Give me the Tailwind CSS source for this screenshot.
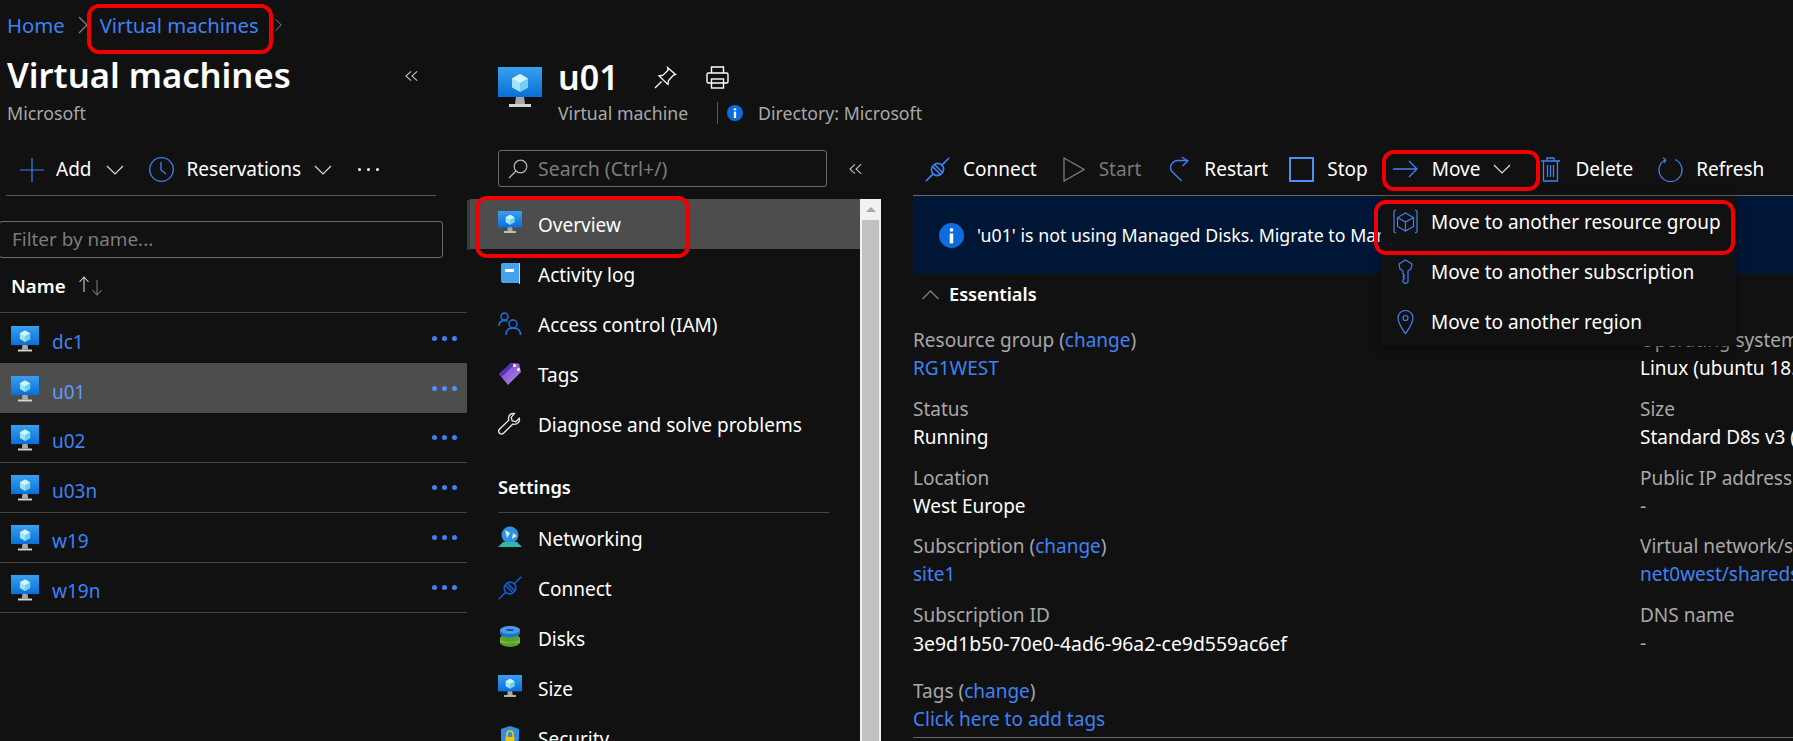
<!DOCTYPE html>
<html lang="en"><head><meta charset="utf-8"><title>Virtual machines</title>
<script src="https://cdn.jsdelivr.net/npm/@tailwindcss/browser@4"></script></head>
<body class="m-0 bg-[#111111]">
<svg class="absolute w-0 h-0" aria-hidden="true"><defs>
<linearGradient id="scr" x1="0" y1="0" x2="0" y2="1"><stop offset="0" stop-color="#38a0f0"/><stop offset="1" stop-color="#0a6fd6"/></linearGradient>
<linearGradient id="tag" x1="0" y1="0" x2="1" y2="1"><stop offset="0" stop-color="#6f3fd0"/><stop offset="1" stop-color="#b48be8"/></linearGradient>
<symbol id="vm" viewBox="0 0 44 44"><rect x="0" y="0" width="44" height="30" fill="url(#scr)"/><path d="M22 7l8 4.500v9L22 25l-8-4.500v-9z" fill="#9fe4f8"/><path d="M22 7l8 4.500-8 4.500-8-4.500z" fill="#d5f5fd"/><path d="M22 16l8-4.500v9L22 25z" fill="#6fd0f2"/><path d="M18 30h8l1 7h-10z" fill="#a8a8a8"/><path d="M11 37h22v3H11z" fill="#d4d4d4"/></symbol>
<symbol id="plug" viewBox="0 0 26 26"><g transform="rotate(-45 13 13)" fill="none" stroke="currentColor" stroke-width="1.700" stroke-linecap="round"><path d="M-3.500 13H6.500M19.500 13H29.500"/><rect x="6.500" y="7" width="13" height="12" rx="6"/><path d="M11.500 7.500v11M14.500 7.500v11"/></g></symbol>
<symbol id="chev" viewBox="0 0 18 10"><path d="M1 1l8 8 8-8" fill="none" stroke="currentColor" stroke-width="1.200"/></symbol>
<symbol id="dbl" viewBox="0 0 14 12"><path d="M6.500 1L1 6l5.500 5M13 1L7.500 6l5.500 5" fill="none" stroke="currentColor" stroke-width="1.100"/></symbol>
<symbol id="info" viewBox="0 0 24 24"><circle cx="12" cy="12" r="12" fill="#0f6cdc"/><circle cx="12" cy="6.500" r="1.800" fill="#fff"/><rect x="10.300" y="10" width="3.400" height="9.500" fill="#fff"/></symbol>
</defs></svg>

<div class="relative w-[1793px] h-[741px] overflow-hidden bg-[#111111] text-white font-['Noto_Sans','Open_Sans',sans-serif] text-[19px]">

  <nav class="h-[50px] flex items-center pl-[7px] text-[20.300px] text-[#3f82f5]">
    <span>Home</span>
    <svg class="w-[10px] h-[18px] ml-[13px] text-[#8a8a8a]" viewBox="0 0 10 18"><path d="M1 1l8 8-8 8" fill="none" stroke="currentColor" stroke-width="1.100"/></svg>
    <span class="ml-[12px]">Virtual machines</span>
    <svg class="w-[7px] h-[14px] ml-[16px] text-[#8a8a8a]" viewBox="0 0 10 18"><path d="M1 1l8 8-8 8" fill="none" stroke="currentColor" stroke-width="1.300"/></svg>
  </nav>

  <div class="flex h-[691px]">
    <aside class="w-[467px] shrink-0 relative">
      <div class="h-[50px] flex items-center pl-[7px] pr-[49px] justify-between">
        <h1 class="text-[34.600px] font-semibold leading-none pt-[1px]">Virtual machines</h1>
        <svg class="w-[13px] h-[12px] mt-[2px] text-[#c8c8c8]"><use href="#dbl"/></svg>
      </div>
      <div class="h-[26px] flex items-center pl-[7px] text-[17.800px] text-[#a8a8a8]">Microsoft</div>
      <div class="ml-[6px] w-[430px] h-[70px] border-b border-[#555] flex items-center pl-[14px] pt-[18px]">
        <svg class="w-[24px] h-[24px] text-[#3f82f5]" viewBox="0 0 24 24"><path d="M12 0v24M0 12h24" stroke="currentColor" stroke-width="1.200"/></svg>
        <span class="ml-[12px]">Add</span>
        <svg class="w-[18px] h-[10px] ml-[14px] text-[#ddd]"><use href="#chev"/></svg>
        <svg class="w-[25px] h-[25px] ml-[25px] text-[#3f82f5]" viewBox="0 0 25 25"><g fill="none" stroke="currentColor" stroke-width="1.300"><circle cx="12.500" cy="12.500" r="11.800"/><path d="M12 5v8l5 4"/></g></svg>
        <span class="ml-[13px]">Reservations</span>
        <svg class="w-[18px] h-[10px] ml-[13px] text-[#ddd]"><use href="#chev"/></svg>
        <span class="ml-[26px] flex gap-[6px]"><i class="w-[3px] h-[3px] rounded-full bg-white"></i><i class="w-[3px] h-[3px] rounded-full bg-white"></i><i class="w-[3px] h-[3px] rounded-full bg-white"></i></span>
      </div>
      <div class="mt-[25px] -ml-px w-[444px] h-[37px] border border-[#6b6b6b] rounded-[3px] flex items-center pl-[12px] text-[18.900px] text-[#7c7c7c]">Filter by name...</div>
      <div class="h-[55px] flex items-center pl-[11px] pt-[2px] border-b border-[#444] font-semibold text-[18.700px]">Name
        <svg class="w-[26px] h-[20px] ml-[12px]" viewBox="0 0 26 20"><path d="M6 16V1M1.500 6L6 1l4.500 5" fill="none" stroke="#ccc" stroke-width="1.100"/><path d="M19 4v15M14.500 14l4.500 5 4.500-5" fill="none" stroke="#777" stroke-width="1.100"/></svg>
      </div>
      <ul class="text-[#3f82f5]">
        <li class="h-[50px] flex items-center pl-[11px] pr-[10px]"><svg class="w-[28px] h-[28px] mt-[3px]"><use href="#vm"/></svg><span class="ml-[13px] pt-[8px]">dc1</span><span class="ml-auto flex gap-[5px]"><i class="w-[5px] h-[5px] rounded-full bg-[#3f82f5]"></i><i class="w-[5px] h-[5px] rounded-full bg-[#3f82f5]"></i><i class="w-[5px] h-[5px] rounded-full bg-[#3f82f5]"></i></span></li>
        <li class="h-[50px] flex items-center pl-[11px] pr-[10px] bg-[#4d4d4d] text-[#5c9bf8]"><svg class="w-[28px] h-[28px] mt-[3px]"><use href="#vm"/></svg><span class="ml-[13px] pt-[8px]">u01</span><span class="ml-auto flex gap-[5px]"><i class="w-[5px] h-[5px] rounded-full bg-[#4f93f8]"></i><i class="w-[5px] h-[5px] rounded-full bg-[#4f93f8]"></i><i class="w-[5px] h-[5px] rounded-full bg-[#4f93f8]"></i></span></li>
        <li class="h-[50px] flex items-center pl-[11px] pr-[10px] border-b border-[#444]"><svg class="w-[28px] h-[28px] mt-[3px]"><use href="#vm"/></svg><span class="ml-[13px] pt-[8px]">u02</span><span class="ml-auto flex gap-[5px]"><i class="w-[5px] h-[5px] rounded-full bg-[#3f82f5]"></i><i class="w-[5px] h-[5px] rounded-full bg-[#3f82f5]"></i><i class="w-[5px] h-[5px] rounded-full bg-[#3f82f5]"></i></span></li>
        <li class="h-[50px] flex items-center pl-[11px] pr-[10px] border-b border-[#444]"><svg class="w-[28px] h-[28px] mt-[3px]"><use href="#vm"/></svg><span class="ml-[13px] pt-[8px]">u03n</span><span class="ml-auto flex gap-[5px]"><i class="w-[5px] h-[5px] rounded-full bg-[#3f82f5]"></i><i class="w-[5px] h-[5px] rounded-full bg-[#3f82f5]"></i><i class="w-[5px] h-[5px] rounded-full bg-[#3f82f5]"></i></span></li>
        <li class="h-[50px] flex items-center pl-[11px] pr-[10px] border-b border-[#444]"><svg class="w-[28px] h-[28px] mt-[3px]"><use href="#vm"/></svg><span class="ml-[13px] pt-[8px]">w19</span><span class="ml-auto flex gap-[5px]"><i class="w-[5px] h-[5px] rounded-full bg-[#3f82f5]"></i><i class="w-[5px] h-[5px] rounded-full bg-[#3f82f5]"></i><i class="w-[5px] h-[5px] rounded-full bg-[#3f82f5]"></i></span></li>
        <li class="h-[50px] flex items-center pl-[11px] pr-[10px] border-b border-[#444]"><svg class="w-[28px] h-[28px] mt-[3px]"><use href="#vm"/></svg><span class="ml-[13px] pt-[8px]">w19n</span><span class="ml-auto flex gap-[5px]"><i class="w-[5px] h-[5px] rounded-full bg-[#3f82f5]"></i><i class="w-[5px] h-[5px] rounded-full bg-[#3f82f5]"></i><i class="w-[5px] h-[5px] rounded-full bg-[#3f82f5]"></i></span></li>
      </ul>
    </aside>
    <div class="w-[3px] shrink-0 pt-[150px]"><div class="h-[50px] bg-[#3a3a3a]"></div></div>

    <section class="flex-1 min-w-0">
      <header class="h-[100px] pl-[28px] flex">
        <svg class="w-[44px] h-[44px] mt-[17px]"><use href="#vm"/></svg>
        <div class="ml-[16px] pt-[5px]">
          <div class="flex items-center h-[44px]">
            <span class="text-[34px] font-semibold leading-none">u01</span>
            <svg class="w-[23px] h-[23px] ml-[35px]" viewBox="0 0 23 23"><g fill="none" stroke="#fff" stroke-width="1.300"><path d="M13.500 1.500l8 7-2 .5-5 5.500-.5 4-9-8.500 4-.8 5-5z"/><path d="M1 22l6.500-6.500"/></g></svg>
            <svg class="w-[23px] h-[23px] ml-[29px]" viewBox="0 0 23 23"><g fill="none" stroke="#fff" stroke-width="1.400"><path d="M5.500 7V1h12v6"/><rect x="1" y="7" width="21" height="10" rx="1.500"/><rect x="5.500" y="13" width="12" height="9"/></g></svg>
          </div>
          <div class="flex items-center h-[26px] text-[17.700px] text-[#a8a8a8] mt-[1px] whitespace-nowrap">
            <span class="w-[159px]">Virtual machine</span>
            <span class="w-px h-[22px] bg-[#555]"></span>
            <svg class="w-[16px] h-[16px] ml-[9px]"><use href="#info"/></svg>
            <span class="ml-[15px]">Directory: Microsoft</span>
          </div>
        </div>
      </header>

      <div class="flex h-[591px]">
        <div class="w-[411px] shrink-0">
          <div class="h-[49px] pl-[28px] flex items-start">
            <div class="w-[329px] h-[37px] border border-[#6b6b6b] rounded-[3px] flex items-center pl-[9px] text-[19.500px] text-[#7c7c7c]">
              <svg class="w-[20px] h-[20px] text-[#bbb]" viewBox="0 0 20 20"><g fill="none" stroke="currentColor" stroke-width="1.200"><circle cx="12.500" cy="7.500" r="6.300"/><path d="M8 12L1 19"/></g></svg>
              <span class="ml-[10px]">Search (Ctrl+/)</span>
            </div>
            <svg class="w-[13px] h-[12px] ml-[22px] mt-[13px] text-[#c8c8c8]"><use href="#dbl"/></svg>
          </div>
          <div class="flex h-[542px]">
            <div class="w-[390px] shrink-0">
              <div class="h-[50px] flex items-center pl-[28px] bg-[#4d4d4d]"><svg class="w-[24px] h-[24px] mb-[2px]"><use href="#vm"/></svg><span class="ml-[16px] pt-[2px]">Overview</span></div>
              <div class="h-[50px] flex items-center pl-[28px]"><svg class="w-[24px] h-[24px]" viewBox="0 0 24 24"><path d="M3 3a2 2 0 0 1 2-2h16v20H5a2 2 0 0 1-2-2z" fill="#46a2ee"/><path d="M21 1h1v21h-1z" fill="#bfe3fb"/><path d="M7 7h9v3H7z" fill="#fff"/></svg><span class="ml-[16px] pt-[2px]">Activity log</span></div>
              <div class="h-[50px] flex items-center pl-[28px]"><svg class="w-[24px] h-[24px]" viewBox="0 0 24 24"><g fill="none" stroke="#1b74e8" stroke-width="1.500"><circle cx="6.500" cy="4.500" r="3.500"/><path d="M1 14c0-3.500 2-5.500 5.500-5.500 1.200 0 2.300.3 3.200.8"/><circle cx="15" cy="12" r="4"/><path d="M8 23c0-4.500 2.500-7 7-7s7.500 2.500 7.500 7"/></g></svg><span class="ml-[16px] pt-[2px]">Access control (IAM)</span></div>
              <div class="h-[50px] flex items-center pl-[28px]"><svg class="w-[24px] h-[24px]" viewBox="0 0 24 24"><path d="M1 12L13 1l8 .5 2 8.500L10 23z" fill="url(#tag)"/><path d="M1 12L13 1l3 2L4 14.500z" fill="#5b2fb5"/><circle cx="16.500" cy="3.500" r="1.500" fill="#fff"/><circle cx="20.500" cy="7.500" r="1.500" fill="#fff"/></svg><span class="ml-[16px] pt-[2px]">Tags</span></div>
              <div class="h-[50px] flex items-center pl-[28px]"><svg class="w-[24px] h-[24px]" viewBox="0 0 24 24"><path d="M16.500 1.500c-3-.7-6 1.500-6 4.700 0 .7.100 1.300.3 1.900L1.500 17.300c-1 1-1 2.700.1 3.900 1.200 1.200 2.900 1.200 3.900.1l9.300-9.300c.6.200 1.200.3 1.800.3 3.300 0 5.500-3 4.800-6l-3.700 3.500-3.500-1-1-3.400z" fill="none" stroke="#eee" stroke-width="1.300"/></svg><span class="ml-[16px] pt-[2px]">Diagnose and solve problems</span></div>
              <div class="h-[63px] pt-[25px] pl-[28px] font-semibold leading-[26px] text-[18.300px]"><span>Settings</span></div>
              <div class="ml-[28px] w-[331px] border-b border-[#444] h-0"></div>
              <div class="h-[50px] flex items-center pl-[28px]"><svg class="w-[24px] h-[24px]" viewBox="0 0 24 24"><circle cx="12" cy="9" r="8.500" fill="#2f8fe0"/><path d="M7 4l5 3-3 5zM15 7l4 3-5 3z" fill="#d9f1ff"/><path d="M0 21l5-5h14l5 5z" fill="#2eb8a5"/></svg><span class="ml-[16px] pt-[2px]">Networking</span></div>
              <div class="h-[50px] flex items-center pl-[28px] text-[#0f5fd0]"><svg class="w-[24px] h-[24px]"><use href="#plug"/></svg><span class="ml-[16px] pt-[2px] text-white">Connect</span></div>
              <div class="h-[50px] flex items-center pl-[28px]"><svg class="w-[24px] h-[24px]" viewBox="0 0 24 24"><ellipse cx="12" cy="16" rx="10" ry="5" fill="#5aa02c"/><rect x="2" y="12" width="20" height="5" fill="#7cb82f"/><ellipse cx="12" cy="12" rx="10" ry="4" fill="#5aa02c"/><ellipse cx="12" cy="7" rx="10" ry="4.500" fill="#1f72c8"/><rect x="2" y="3.500" width="20" height="3.500" fill="#1f72c8"/><ellipse cx="12" cy="4" rx="10" ry="4" fill="#4a9ae6"/><ellipse cx="12" cy="4" rx="4" ry="1" fill="#0d4f9e"/></svg><span class="ml-[16px] pt-[2px]">Disks</span></div>
              <div class="h-[50px] flex items-center pl-[28px]"><svg class="w-[24px] h-[24px] mb-[2px]"><use href="#vm"/></svg><span class="ml-[16px] pt-[2px]">Size</span></div>
              <div class="h-[50px] flex items-center pl-[28px]"><svg class="w-[24px] h-[24px]" viewBox="0 0 24 24"><path d="M12 0l9 3v9c0 6-5 10-9 12-4-2-9-6-9-12V3z" fill="#2f8fe0"/><rect x="7.500" y="11" width="9" height="8" fill="#f7c600"/><path d="M9 11V8a3 3 0 0 1 6 0v3" fill="none" stroke="#f7c600" stroke-width="1.600"/></svg><span class="ml-[16px] pt-[2px]">Security</span></div>
            </div>
            <div class="w-[21px] shrink-0 bg-[#f1f1f1] px-[2px]">
              <div class="h-[21px] flex items-center justify-center"><div class="w-0 h-0 border-x-[5px] border-x-transparent border-b-[5px] border-b-[#a8a8a8]"></div></div>
              <div class="h-full bg-[#c1c1c1]"></div>
            </div>
          </div>
        </div>

        <div class="flex-1 min-w-0 -mt-[1px] pb-[1px] relative">
          <div class="ml-[32px] pl-[12px] h-[47px] border-b border-[#666] flex items-start whitespace-nowrap">
            <div class="flex items-center h-[40px] text-[#3f82f5]"><svg class="w-[25px] h-[25px]"><use href="#plug"/></svg><span class="ml-[13px] text-white">Connect</span></div>
            <div class="flex items-center h-[40px] ml-[26px] text-[#7a7a7a]"><svg class="w-[22px] h-[25px]" viewBox="0 0 22 25"><path d="M1 1l20 11.500L1 24z" fill="none" stroke="currentColor" stroke-width="1.300"/></svg><span class="ml-[14px]">Start</span></div>
            <div class="flex items-center h-[40px] ml-[28px] text-[#3f82f5]"><svg class="w-[20px] h-[25px]" viewBox="0 0 20 25"><g fill="none" stroke="currentColor" stroke-width="1.300"><path d="M12.700 24L2.500 14C-.5 9 4 3.500 9 3.500h9.500"/><path d="M12.500 0l6.500 3.800-5.500 5.200"/></g></svg><span class="ml-[15px] text-white">Restart</span></div>
            <div class="flex items-center h-[40px] ml-[21px] text-[#3f82f5]"><span class="w-[25px] h-[25px] border-2 border-[#4d90f5]"></span><span class="ml-[13px] text-white">Stop</span></div>
            <div class="flex items-center h-[40px] ml-[25px] text-[#3f82f5]"><svg class="w-[25px] h-[18px]" viewBox="0 0 25 18"><path d="M0 9h24M16 1l8 8-8 8" fill="none" stroke="currentColor" stroke-width="1.300"/></svg><span class="ml-[14px] text-white">Move</span><svg class="w-[18px] h-[10px] ml-[13px] text-[#ddd]"><use href="#chev"/></svg></div>
            <div class="flex items-center h-[40px] ml-[30px] text-[#3f82f5]"><svg class="w-[19px] h-[25px]" viewBox="0 0 19 25"><g fill="none" stroke="currentColor" stroke-width="1.300"><path d="M0 4h19M6 4V1h7v3M2.500 4v20h14V4M6.500 8v12M9.500 8v12M12.500 8v12"/></g></svg><span class="ml-[15px] text-white">Delete</span></div>
            <div class="flex items-center h-[40px] ml-[25px] text-[#3f82f5]"><svg class="w-[25px] h-[25px]" viewBox="0 0 25 25"><path d="M8 2.500A11.500 11.500 0 1 0 17 2.500M8 2.500L5 1M8 3l-2 3" fill="none" stroke="currentColor" stroke-width="1.300"/></svg><span class="ml-[13px] text-white">Refresh</span></div>
            <div class="ml-[33px] w-[4px] h-[24px] mt-[8px] rounded-l-[2px] bg-[#3f82f5]"></div>
          </div>
          <div class="ml-[32px] h-[78px] bg-[#001636] flex items-center pl-[26px] whitespace-nowrap">
            <svg class="w-[25px] h-[25px]"><use href="#info"/></svg>
            <span class="ml-[13px] text-[17.800px]">'u01' is not using Managed Disks. Migrate to Managed Disks.</span>
          </div>
          <div class="ml-[40px] h-[38px] pt-[4px] flex items-center font-semibold text-[18.200px]">
            <svg class="w-[19px] h-[10px] text-[#777]" viewBox="0 0 18 10"><path d="M1 9l8-8 8 8" fill="none" stroke="currentColor" stroke-width="1.500"/></svg>
            <span class="ml-[9px]">Essentials</span>
          </div>
          <div class="ml-[32px] mt-[14px] grid grid-cols-[727px_1fr] whitespace-nowrap overflow-hidden">
            <dl>
              <div class="h-[68.800px]"><dt class="h-[28px] text-[#a8a8a8]">Resource group (<a class="text-[#3f82f5]">change</a>)</dt><dd class="text-[#3f82f5]">RG1WEST</dd></div>
              <div class="h-[68.800px]"><dt class="h-[28px] text-[#a8a8a8]">Status</dt><dd>Running</dd></div>
              <div class="h-[68.800px]"><dt class="h-[28px] text-[#a8a8a8]">Location</dt><dd>West Europe</dd></div>
              <div class="h-[68.800px]"><dt class="h-[28px] text-[#a8a8a8]">Subscription (<a class="text-[#3f82f5]">change</a>)</dt><dd class="text-[#3f82f5]">site1</dd></div>
              <div class="h-[68.800px]"><dt class="h-[28px] text-[#a8a8a8]">Subscription ID</dt><dd class="text-[19.400px]">3e9d1b50-70e0-4ad6-96a2-ce9d559ac6ef</dd></div>
            </dl>
            <dl>
              <div class="h-[68.800px]"><dt class="h-[28px] text-[#a8a8a8]">Operating system</dt><dd>Linux (ubuntu 18.04)</dd></div>
              <div class="h-[68.800px]"><dt class="h-[28px] text-[#a8a8a8]">Size</dt><dd>Standard D8s v3 (8 vcpus)</dd></div>
              <div class="h-[68.800px]"><dt class="h-[28px] text-[#a8a8a8]">Public IP address</dt><dd class="text-[#a8a8a8]">-</dd></div>
              <div class="h-[68.800px]"><dt class="h-[28px] text-[#a8a8a8]">Virtual network/subnet</dt><dd class="text-[#3f82f5]">net0west/sharedsubnet</dd></div>
              <div class="h-[68.800px]"><dt class="h-[28px] text-[#a8a8a8]">DNS name</dt><dd class="text-[#a8a8a8]">-</dd></div>
            </dl>
          </div>
          <div class="ml-[32px] mt-[7px] h-[61px] border-b border-[#666]">
            <div class="h-[28px] text-[#a8a8a8]">Tags (<a class="text-[#3f82f5]">change</a>)</div>
            <div class="text-[#3f82f5]">Click here to add tags</div>
          </div>

          <div class="absolute left-[500px] top-[47px] w-[355px] bg-[#111111] shadow-[0_2px_8px_rgba(0,0,0,0.5)] whitespace-nowrap">
            <div class="h-[50px] flex items-center pl-[12px]"><svg class="w-[25px] h-[25px] text-[#3f82f5]" viewBox="0 0 25 25"><g fill="none" stroke="currentColor" stroke-width="1.200"><path d="M12.500 4l8 4.500v9l-8 4.500-8-4.500v-9zM4.500 8.500l8 4.500 8-4.500M12.500 13v9"/><path d="M3 1L1 2v21l2 1M22 1l2 1v21l-2 1"/></g></svg><span class="ml-[13px] pt-[2px]">Move to another resource group</span></div>
            <div class="h-[50px] flex items-center pl-[12px]"><svg class="w-[25px] h-[25px] text-[#3f82f5]" viewBox="0 0 25 25"><path d="M12.500 1l6.500 4-1 5-3 2v11l-2.500 2-2.500-2v-2l1.500-1.500-1.500-1.500 1.500-1.500-1.500-1.500v-3l-3-2-1-5z" fill="none" stroke="currentColor" stroke-width="1.200"/></svg><span class="ml-[13px] pt-[2px]">Move to another subscription</span></div>
            <div class="h-[50px] flex items-center pl-[12px]"><svg class="w-[25px] h-[25px] text-[#3f82f5]" viewBox="0 0 25 25"><g fill="none" stroke="currentColor" stroke-width="1.200"><path d="M12.500 25C9 19 5 14.500 5 9a7.500 7.500 0 0 1 15 0c0 5.500-4 10-7.500 16z"/><circle cx="12.500" cy="9" r="2.500"/></g></svg><span class="ml-[13px] pt-[2px]">Move to another region</span></div>
          </div>
        </div>
      </div>
    </section>
  </div>

  <div class="absolute left-[87px] top-[4px] w-[186px] h-[50px] border-[4px] border-[#f00000] rounded-[12px]"></div>
  <div class="absolute left-[475px] top-[196px] w-[215px] h-[62px] border-[4px] border-[#f00000] rounded-[12px]"></div>
  <div class="absolute left-[1382px] top-[150px] w-[158px] h-[41px] border-[4px] border-[#f00000] rounded-[12px]"></div>
  <div class="absolute left-[1374px] top-[200px] w-[361px] h-[55px] border-[4px] border-[#f00000] rounded-[12px]"></div>
</div>
</body></html>
